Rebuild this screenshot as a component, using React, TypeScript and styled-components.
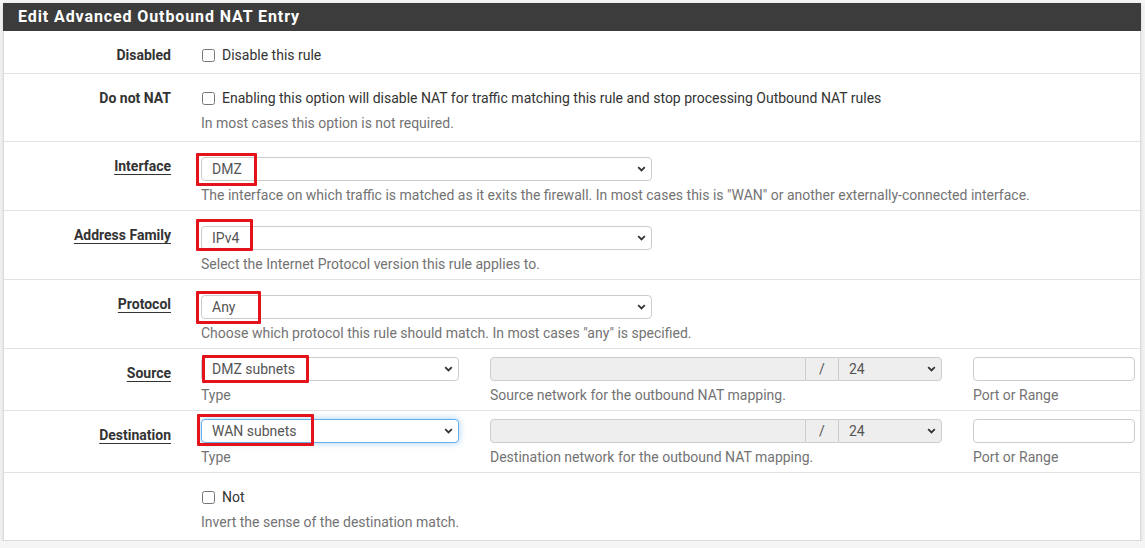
import React from "react";
import styled, { createGlobalStyle, css } from "styled-components";

const Global = createGlobalStyle`
  html, body { margin: 0; padding: 0; }
  body {
    background: #f5f5f5;
    font-family: Roboto, "Liberation Sans", sans-serif;
    font-size: 14px;
    color: #333;
  }
`;

const Panel = styled.div`
  margin: 3px 0 0 3px;
  width: 1138px;
  box-sizing: border-box;
  background: #fff;
  border: 1px solid #dcdcdc;
  border-top: none;
  box-shadow: 0 2px 5px rgba(0, 0, 0, 0.12);
`;

const Header = styled.div`
  height: 28px;
  margin: 0 -1px;
  background: #3c3c3c;
  color: #fff;
  font-weight: 700;
  font-size: 16px;
  line-height: 28px;
  padding-left: 15px;
  letter-spacing: 0.9px;
`;

const Row = styled.div<{ $last?: boolean }>`
  display: flex;
  border-bottom: ${(p) => (p.$last ? "none" : "1px solid #e2e2e2")};
`;

const LabelCell = styled.div`
  width: 185px;
  box-sizing: border-box;
  padding: 14px 18px 0 0;
  text-align: right;
  line-height: 20px;
  font-weight: 700;
  color: #333;
  flex: none;
`;

const Underlined = styled.span`
  text-decoration: underline;
  text-underline-offset: 3px;
  text-decoration-thickness: 1px;
`;

const Content = styled.div<{ $top: number; $bottom: number }>`
  flex: 1;
  padding: ${(p) => p.$top}px 0 ${(p) => p.$bottom}px 12px;
  line-height: 20px;
`;

const CheckLine = styled.label`
  display: flex;
  align-items: center;
  height: 20px;
  color: #333;
`;

const Check = styled.input`
  width: 13px;
  height: 13px;
  margin: 0 7px 0 1px;
`;

const Help = styled.div<{ $gap: number }>`
  margin-top: ${(p) => p.$gap}px;
  color: #737373;
  line-height: 20px;
  white-space: nowrap;
`;

const SelectWrap = styled.div<{ $w: number }>`
  position: relative;
  width: ${(p) => p.$w}px;
  height: 24px;
  flex: none;
`;

const fieldBase = css`
  box-sizing: border-box;
  height: 24px;
  border: 1px solid #ccc;
  font-family: Roboto, "Liberation Sans", sans-serif;
  font-size: 14px;
  color: #555;
  outline: none;
`;

const Select = styled.select<{ $focus?: boolean; $disabled?: boolean; $radius?: string }>`
  ${fieldBase}
  appearance: none;
  -webkit-appearance: none;
  width: 100%;
  padding: 0 24px 0 10px;
  border-radius: ${(p) => p.$radius ?? "4px"};
  background: ${(p) => (p.$disabled ? "#eee" : "#fff")};
  ${(p) =>
    p.$focus &&
    css`
      border-color: #66afe9;
      box-shadow: 0 0 7px rgba(102, 175, 233, 0.6);
    `}
`;

const Chevron = styled.svg`
  position: absolute;
  right: 6px;
  top: 8px;
  width: 9px;
  height: 8px;
  pointer-events: none;
`;

const Mark = styled.div<{ $l: number; $t: number; $w: number; $h: number }>`
  position: absolute;
  left: ${(p) => p.$l}px;
  top: ${(p) => p.$t}px;
  width: ${(p) => p.$w}px;
  height: ${(p) => p.$h}px;
  box-sizing: border-box;
  border: 3px solid #e3121b;
  border-radius: 1px;
  pointer-events: none;
`;

const Fields = styled.div`
  display: flex;
  gap: 31px;
`;

const Col = styled.div<{ $w: number }>`
  width: ${(p) => p.$w}px;
  flex: none;
`;

const Group = styled.div`
  display: flex;
  height: 24px;
`;

const TextInput = styled.input<{ $disabled?: boolean; $w: number; $radius: string }>`
  ${fieldBase}
  width: ${(p) => p.$w}px;
  padding: 0 10px;
  background: ${(p) => (p.$disabled ? "#eee" : "#fff")};
  border-radius: ${(p) => p.$radius};
`;

const Addon = styled.div`
  box-sizing: border-box;
  width: 32px;
  height: 24px;
  border-top: 1px solid #ccc;
  border-bottom: 1px solid #ccc;
  background: #eee;
  color: #555;
  display: flex;
  align-items: center;
  justify-content: center;
  font-size: 14px;
`;

type MarkBox = { l: number; t: number; w: number; h: number };

function Dropdown({
  w,
  value,
  mark,
  focus,
  disabled,
  radius,
}: {
  w: number;
  value: string;
  mark?: MarkBox;
  focus?: boolean;
  disabled?: boolean;
  radius?: string;
}) {
  return (
    <SelectWrap $w={w}>
      <Select $focus={focus} $disabled={disabled} $radius={radius} defaultValue={value}>
        <option value={value}>{value}</option>
      </Select>
      <Chevron viewBox="0 0 9 8">
        <path d="M1.2 2.2 L4.5 5.4 L7.8 2.2" fill="none" stroke="#333" strokeWidth="1.8" />
      </Chevron>
      {mark && <Mark $l={mark.l} $t={mark.t} $w={mark.w} $h={mark.h} />}
    </SelectWrap>
  );
}

function NetRow({
  label,
  type,
  mark,
  focus,
  netHelp,
}: {
  label: string;
  type: string;
  mark: MarkBox;
  focus?: boolean;
  netHelp: string;
}) {
  return (
    <Row>
      <LabelCell>
        <Underlined>{label}</Underlined>
      </LabelCell>
      <Content $top={8} $bottom={5}>
        <Fields>
          <Col $w={258}>
            <Dropdown w={258} value={type} mark={mark} focus={focus} />
            <Help $gap={4}>Type</Help>
          </Col>
          <Col $w={452}>
            <Group>
              <TextInput $disabled disabled $w={316} $radius="4px 0 0 4px" />
              <Addon>/</Addon>
              <Dropdown w={104} value="24" disabled radius="0 4px 4px 0" />
            </Group>
            <Help $gap={4}>{netHelp}</Help>
          </Col>
          <Col $w={162}>
            <TextInput $w={162} $radius="4px" />
            <Help $gap={4}>Port or Range</Help>
          </Col>
        </Fields>
      </Content>
    </Row>
  );
}

export default function App() {
  return (
    <>
      <Global />
      <Panel>
        <Header>Edit Advanced Outbound NAT Entry</Header>
        <Row>
          <LabelCell>Disabled</LabelCell>
          <Content $top={14} $bottom={8}>
            <CheckLine>
              <Check type="checkbox" />
              Disable this rule
            </CheckLine>
          </Content>
        </Row>
        <Row>
          <LabelCell>Do not NAT</LabelCell>
          <Content $top={14} $bottom={8}>
            <CheckLine>
              <Check type="checkbox" />
              Enabling this option will disable NAT for traffic matching this rule and stop processing Outbound NAT rules
            </CheckLine>
            <Help $gap={5}>In most cases this option is not required.</Help>
          </Content>
        </Row>
        <Row>
          <LabelCell>
            <Underlined>Interface</Underlined>
          </LabelCell>
          <Content $top={15} $bottom={5}>
            <Dropdown w={451} value="DMZ" mark={{ l: -5, t: -4, w: 61, h: 33 }} />
            <Help $gap={4}>
              The interface on which traffic is matched as it exits the firewall. In most cases this is "WAN" or another
              externally-connected interface.
            </Help>
          </Content>
        </Row>
        <Row>
          <LabelCell>
            <Underlined>Address Family</Underlined>
          </LabelCell>
          <Content $top={15} $bottom={5}>
            <Dropdown w={451} value="IPv4" mark={{ l: -5, t: -7, w: 57, h: 32 }} />
            <Help $gap={4}>Select the Internet Protocol version this rule applies to.</Help>
          </Content>
        </Row>
        <Row>
          <LabelCell>
            <Underlined>Protocol</Underlined>
          </LabelCell>
          <Content $top={15} $bottom={5}>
            <Dropdown w={451} value="Any" mark={{ l: -5, t: -4, w: 65, h: 33 }} />
            <Help $gap={4}>Choose which protocol this rule should match. In most cases "any" is specified.</Help>
          </Content>
        </Row>
        <NetRow
          label="Source"
          type="DMZ subnets"
          mark={{ l: 1, t: -2, w: 107, h: 28 }}
          netHelp="Source network for the outbound NAT mapping."
        />
        <NetRow
          label="Destination"
          type="WAN subnets"
          focus
          mark={{ l: -4, t: -5, w: 117, h: 32 }}
          netHelp="Destination network for the outbound NAT mapping."
        />
        <Row $last>
          <LabelCell />
          <Content $top={14} $bottom={8}>
            <CheckLine>
              <Check type="checkbox" />
              Not
            </CheckLine>
            <Help $gap={5}>Invert the sense of the destination match.</Help>
          </Content>
        </Row>
      </Panel>
    </>
  );
}
